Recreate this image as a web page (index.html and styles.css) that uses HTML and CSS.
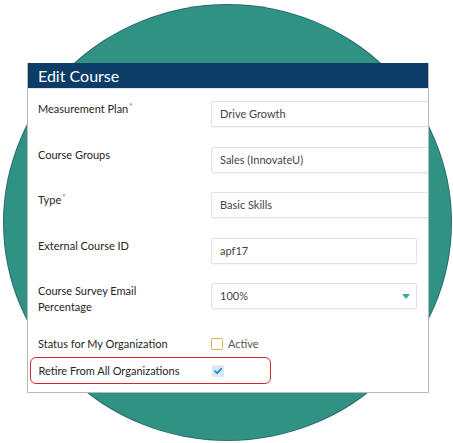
FILE: index.html
```html
<!DOCTYPE html>
<html>
<head>
<meta charset="utf-8">
<link rel="stylesheet" href="styles.css">
</head>
<body>
<div class="stage">
  <div class="circle"></div>
  <div class="card">
    <div class="card-head">Edit Course</div>
    <div class="card-body">
      <div class="fields">
        <div class="label">Measurement Plan<span class="req">*</span></div>
        <div class="input wide">Drive Growth</div>
        <div class="label">Course Groups</div>
        <div class="input wide">Sales (InnovateU)</div>
        <div class="label">Type<span class="req">*</span></div>
        <div class="input wide">Basic Skills</div>
        <div class="label">External Course ID</div>
        <div class="input">apf17</div>
        <div class="label">Course Survey Email<br>Percentage</div>
        <div class="input select">100%<span class="caret"></span></div>
      </div>
      <div class="check-row status">
        <div class="label">Status for My Organization</div>
        <div class="check-wrap"><span class="box empty"></span><span class="check-text">Active</span></div>
      </div>
      <div class="check-row retire">
        <div class="label">Retire From All Organizations</div>
        <div class="check-wrap"><span class="box checked"><svg viewBox="0 0 12 12" width="12" height="12"><path d="M3 6.2 L5.1 8.2 L9.2 3.8" fill="none" stroke="#1f8be0" stroke-width="1.8" stroke-linecap="round" stroke-linejoin="round"/></svg></span></div>
      </div>
    </div>
  </div>
</div>
</body>
</html>
```
FILE: styles.css
```css
html, body {
  margin: 0;
  padding: 0;
  background: #ffffff;
}
.stage {
  position: relative;
  width: 453px;
  height: 443px;
  overflow: hidden;
  font-family: Lato, "Open Sans", sans-serif;
  background: #fff;
  padding-top: 63px;
  box-sizing: border-box;
}
.circle {
  position: absolute;
  left: 4px;
  top: 5px;
  width: 447px;
  height: 435px;
  border-radius: 50%;
  background: #2f9283;
  box-shadow: 0 0 0 1px #2d6a73;
}
.card {
  position: relative;
  margin-left: 27px;
  width: 402px;
  background: #fff;
  border: 1px solid #b9b9b9;
  border-top: none;
  box-sizing: border-box;
  overflow: hidden;
}
.card-head {
  height: 25px;
  background: #0c3c68;
  color: #fff;
  font-size: 16px;
  line-height: 25px;
  padding-left: 10px;
  border-bottom: 1px solid #e4e4e4;
}
.card-body {
  padding: 12px 0 8px 0;
}
.fields {
  display: grid;
  grid-template-columns: 173px 1fr;
  row-gap: 19.5px;
  padding-left: 10px;
}
.label {
  font-size: 11px;
  line-height: 16px;
  color: #262626;
}
.req {
  color: #d9534f;
  font-size: 8px;
  vertical-align: top;
  line-height: 10px;
  margin-left: 1px;
}
.input {
  position: relative;
  height: 26px;
  width: 206px;
  box-sizing: border-box;
  border: 1px solid #e2e2e2;
  border-radius: 2px;
  box-shadow: 0 1px 1px rgba(0,0,0,0.04);
  font-size: 11px;
  line-height: 24px;
  color: #444;
  padding-left: 8px;
}
.input.wide {
  width: 240px;
}
.caret {
  position: absolute;
  right: 6px;
  top: 10px;
  width: 0;
  height: 0;
  border-left: 4.5px solid transparent;
  border-right: 4.5px solid transparent;
  border-top: 5px solid #38ad9c;
}
.check-row {
  display: grid;
  grid-template-columns: 173px 1fr;
  align-items: center;
}
.status {
  margin-top: 21px;
  padding-left: 10px;
}
.retire {
  margin: 5px 0 0 2px;
  width: 241px;
  height: 27px;
  box-sizing: border-box;
  border: 1.5px solid #d8242d;
  border-radius: 6px;
  padding-left: 7.5px;
  grid-template-columns: 173px 1fr;
}
.check-wrap {
  display: flex;
  align-items: center;
  gap: 5px;
}
.box {
  display: block;
  width: 12px;
  height: 12px;
  box-sizing: border-box;
  border-radius: 2px;
}
.box.empty {
  border: 1.5px solid #d7b957;
}
.box.checked {
  background: #dde8f2;
}
.box svg {
  display: block;
}
.check-text {
  font-size: 11px;
  color: #555;
  line-height: 14px;
}
```
